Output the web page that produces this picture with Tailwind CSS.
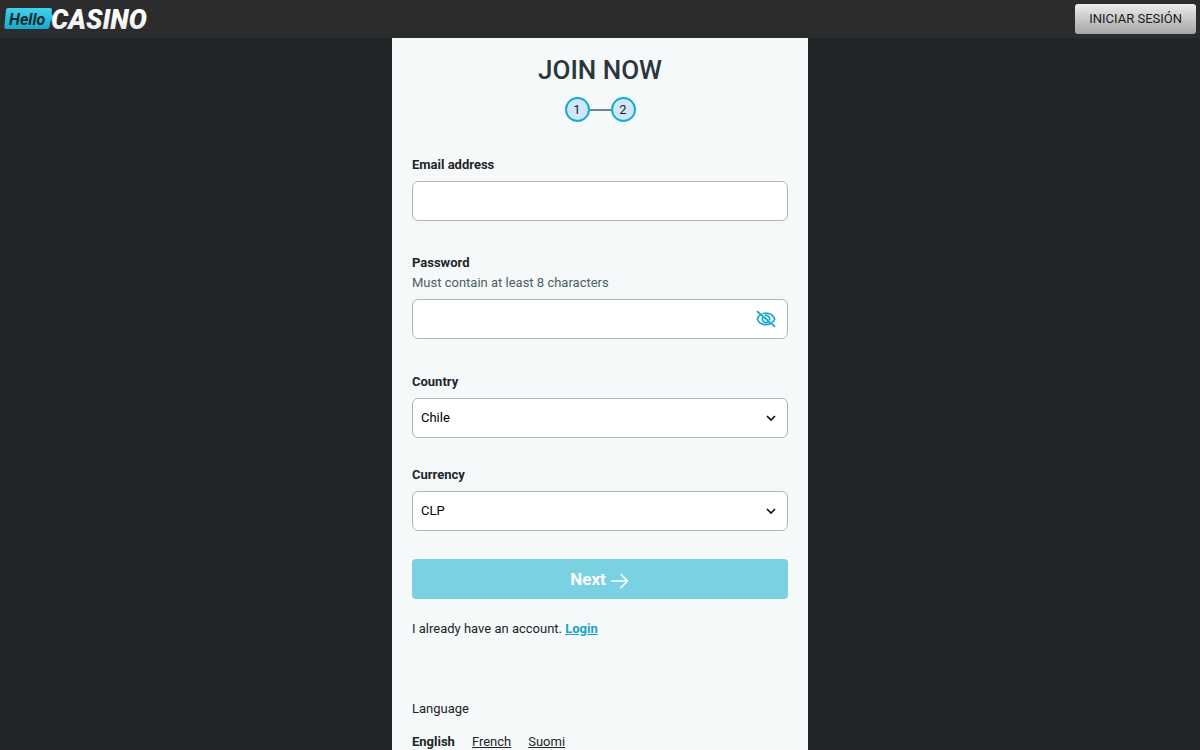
<!DOCTYPE html>
<html lang="en">
<head>
    <meta charset="UTF-8">
    <meta name="viewport" content="width=device-width, initial-scale=1.0">
    <title>Hello Casino - Join Now</title>
    <script src="https://cdn.jsdelivr.net/npm/@tailwindcss/browser@4"></script>
</head>
<body class="bg-[#212528] min-h-screen flex flex-col font-['Roboto',sans-serif] text-[13px] leading-5 text-[#212529]">
    <header class="h-[38px] px-1 flex items-center justify-between bg-[#2c2c2c]">
        <a href="#" aria-label="Hello Casino">
            <svg class="block" width="156" height="32" viewBox="0 -1 156 32">
                <defs>
                    <linearGradient id="badge" x1="0" y1="0" x2="0" y2="1">
                        <stop offset="0" stop-color="#3fd3ee"/>
                        <stop offset="1" stop-color="#16a9cb"/>
                    </linearGradient>
                    <linearGradient id="word" x1="0" y1="0" x2="0" y2="1">
                        <stop offset="0.4" stop-color="#ffffff"/>
                        <stop offset="1" stop-color="#dcdcdc"/>
                    </linearGradient>
                </defs>
                <path d="M4 4H46q2 0 2 2l-.5 4 3 3-4 4-1 6q-.5 2-2.500 2H2q-2 0-1.700-2L2 6q.3-2 2-2z" fill="url(#badge)"/>
                <text x="5" y="21" font-family="Roboto, sans-serif" font-size="16" font-weight="700" font-style="italic" fill="#14282e">Hello</text>
                <text x="47" y="25" font-family="Roboto, sans-serif" font-size="27" font-weight="900" font-style="italic" fill="url(#word)">CASINO</text>
            </svg>
        </a>
        <button type="button" class="h-[30px] px-[14px] rounded-[3px] bg-linear-to-b from-[#ececec] to-[#a6a6a6] text-[#1b1b1b]">INICIAR SESIÓN</button>
    </header>

    <main class="grow w-full max-w-[416px] mx-auto px-5 pt-4 pb-10 bg-[#f6f9f9]">
        <h1 class="text-[26px] leading-8 font-medium text-center text-[#2b373b]">JOIN NOW</h1>

        <ol class="mt-[11px] flex items-center justify-center">
            <li class="size-[25px] rounded-full border-2 border-[#12adcf] bg-[#cfe6fd] flex items-center justify-center">1</li>
            <li class="w-[21px] h-[2px] bg-[#71858e]" aria-hidden="true"></li>
            <li class="size-[25px] rounded-full border-2 border-[#12adcf] bg-[#cfe6fd] flex items-center justify-center">2</li>
        </ol>

        <form class="mt-[33px]">
            <div>
                <label for="email" class="block mb-[6px] font-bold">Email address</label>
                <input id="email" name="email" type="email" autocomplete="email"
                    class="block w-full h-10 px-2 bg-white border border-[#adb5b8] rounded-md">
            </div>

            <div class="mt-8">
                <label for="password" class="block font-bold">Password</label>
                <p id="passwordHint" class="mb-[6px] text-[#4d5f63]">Must contain at least 8 characters</p>
                <div class="relative">
                    <input id="password" name="password" type="password" autocomplete="new-password" aria-describedby="passwordHint"
                        class="block w-full h-10 pl-2 pr-10 bg-white border border-[#adb5b8] rounded-md">
                    <button type="button" aria-label="Show password" class="absolute right-3 top-[10px]">
                        <svg class="block" width="20" height="20" viewBox="0 0 20 20" fill="none" stroke="#1fa9cb" stroke-width="1.800" stroke-linecap="round">
                            <path d="M5.300 5.300C3.400 6.400 2 8.200 1.300 10c1.500 3.500 4.800 5.700 8.700 5.700 1.500 0 2.900-.3 4.200-.9"/>
                            <path d="M7.500 4.500c.8-.2 1.600-.3 2.500-.3 3.900 0 7.200 2.300 8.700 5.800-.5 1.200-1.300 2.300-2.300 3.200"/>
                            <path d="M7 8.300a3.500 3.500 0 0 0 4.800 4.800M9.300 6.500a3.500 3.500 0 0 1 4.200 4.200"/>
                            <path d="M9.500 9.200l1.600 1.500M1.500 2.700l17 14.600"/>
                        </svg>
                    </button>
                </div>
            </div>

            <div class="mt-[33px]">
                <label for="country" class="block mb-[6px] font-bold">Country</label>
                <div class="relative">
                    <select id="country" name="country" class="appearance-none block w-full h-10 px-2 bg-white text-black border border-[#adb5b8] rounded-md">
                        <option selected>Chile</option>
                    </select>
                    <svg class="absolute right-3 top-[15px] pointer-events-none" width="10" height="10" viewBox="0 0 10 10" fill="none" stroke="#111" stroke-width="1.700">
                        <path d="M1 3l4 4 4-4"/>
                    </svg>
                </div>
            </div>

            <div class="mt-[27px]">
                <label for="currency" class="block mb-[6px] font-bold">Currency</label>
                <div class="relative">
                    <select id="currency" name="currency" class="appearance-none block w-full h-10 px-2 bg-white text-black border border-[#adb5b8] rounded-md">
                        <option selected>CLP</option>
                    </select>
                    <svg class="absolute right-3 top-[15px] pointer-events-none" width="10" height="10" viewBox="0 0 10 10" fill="none" stroke="#111" stroke-width="1.700">
                        <path d="M1 3l4 4 4-4"/>
                    </svg>
                </div>
            </div>

            <button type="submit" class="mt-7 w-full h-10 flex items-center justify-center gap-1 rounded-[4px] bg-[#7ad1e1] text-[17px] font-bold text-white">
                Next
                <svg class="mt-[3px]" width="20" height="20" viewBox="0 0 20 20" fill="none" stroke="currentColor" stroke-width="1.700" stroke-linecap="round" stroke-linejoin="round">
                    <path d="M2 10h15.500M11 3.500l6.500 6.500-6.500 6.500"/>
                </svg>
            </button>
        </form>

        <p class="mt-5">I already have an account. <a href="#" class="font-bold underline text-[#12a5c9]">Login</a></p>

        <p class="mt-[60px]">Language</p>
        <nav class="mt-[13px] flex gap-[17px]" aria-label="Language">
            <a href="#" class="font-bold" aria-current="true">English</a>
            <a href="#" class="underline">French</a>
            <a href="#" class="underline">Suomi</a>
        </nav>
    </main>
</body>
</html>
